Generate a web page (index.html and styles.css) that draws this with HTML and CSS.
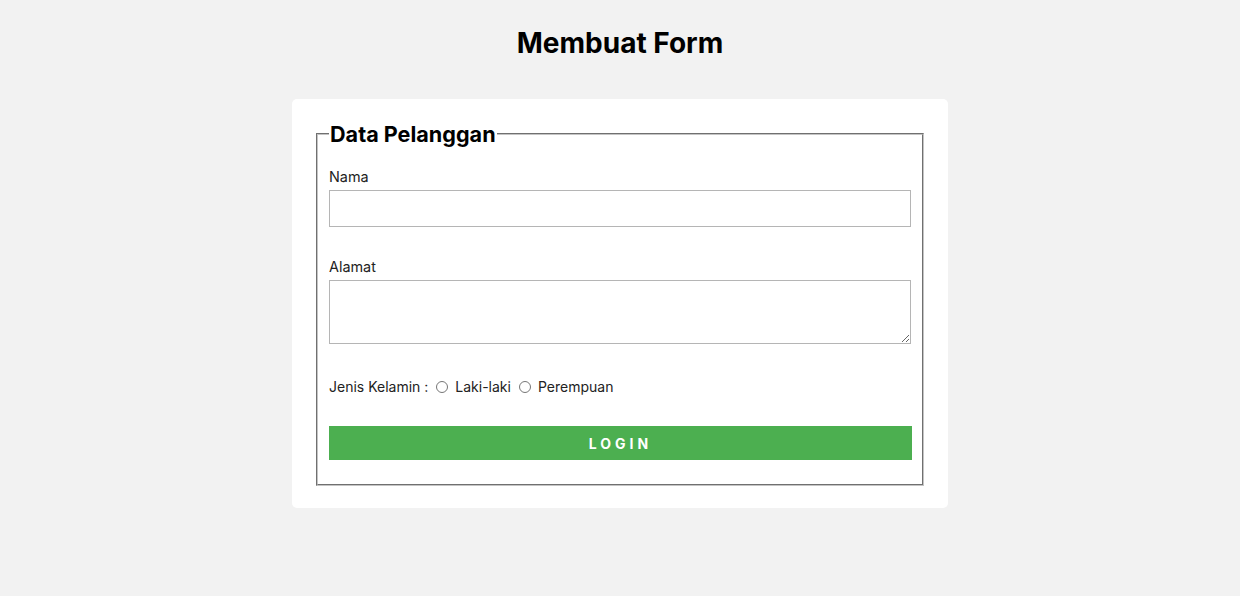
FILE: index.html
```html
<!DOCTYPE html>
<html lang="id">
<head>
<meta charset="utf-8">
<title>Membuat Form</title>
<link rel="stylesheet" href="styles.css">
</head>
<body>
<h1 class="title">Membuat Form</h1>
<div class="card">
  <form class="form">
    <fieldset class="group">
      <legend class="legend">Data Pelanggan</legend>
      <label class="label" for="nama">Nama</label>
      <input class="field" type="text" id="nama">
      <label class="label label-gap" for="alamat">Alamat</label>
      <textarea class="field area" id="alamat"></textarea>
      <div class="gender">
        <span>Jenis Kelamin :</span>
        <input class="radio" type="radio" name="jk" id="laki"><label for="laki">Laki-laki</label>
        <input class="radio" type="radio" name="jk" id="perempuan"><label for="perempuan">Perempuan</label>
      </div>
      <button class="btn" type="button">LOGIN</button>
    </fieldset>
  </form>
</div>
</body>
</html>
```
FILE: styles.css
```css
html, body {
  margin: 0;
  padding: 0;
  background: #f2f2f2;
  font-family: Inter, "Noto Sans", sans-serif;
  color: #222;
}
.title {
  margin: 26px 0 39px;
  text-align: center;
  font-size: 28px;
  line-height: 34px;
  font-weight: 700;
  color: #000;
}
.card {
  width: 612px;
  margin: 0 auto;
  padding: 22px;
  background: #fff;
  border-radius: 5px;
}
.form { margin: 0; }
.group {
  margin: 0 2px;
  padding: 0 11px 9px 11px;
  border: 2px groove #c4c4c4;
}
.legend {
  padding: 0 1px;
  font-size: 21.6px;
  line-height: 26px;
  font-weight: 700;
  color: #000;
}
.label {
  display: block;
  margin-top: 20px;
  margin-bottom: 3px;
  font-size: 14.4px;
  line-height: 20px;
}
.label-gap { margin-top: 30px; }
.field {
  display: block;
  box-sizing: border-box;
  width: 100%;
  height: 37px;
  margin: 0;
  border: 1px solid #b5b5b5;
  font-family: inherit;
}
.area {
  height: 64px;
  resize: vertical;
}
.gender {
  display: flex;
  align-items: center;
  margin-top: 33px;
  font-size: 14px;
  line-height: 20px;
}
.radio {
  width: 12px;
  height: 12px;
  margin: 0 7px 0 8px;
}
.btn {
  display: block;
  width: calc(100% + 1px);
  height: 34px;
  margin: 29px 0 15px;
  border: 0;
  background: #4caf50;
  color: #fff;
  font-family: inherit;
  font-size: 14px;
  font-weight: 700;
  letter-spacing: 4px;
}
```
